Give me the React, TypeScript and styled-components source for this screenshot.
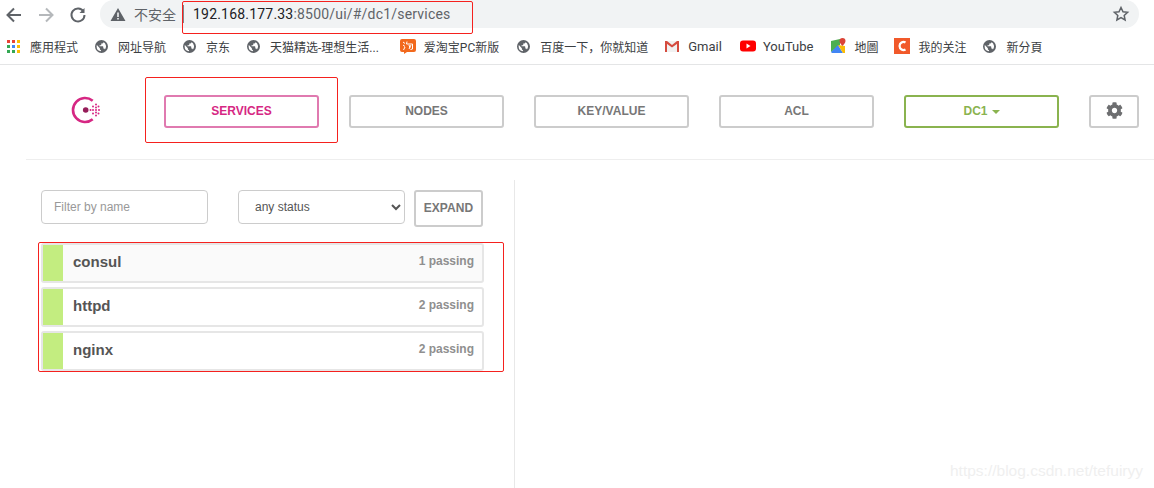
import React from "react";
import styled, { createGlobalStyle } from "styled-components";
import { FaCog } from "react-icons/fa";

const Global = createGlobalStyle`
  html, body { margin: 0; padding: 0; background: #fff; }
  body { width: 1154px; height: 488px; overflow: hidden; font-family: "Liberation Sans", Arial, sans-serif; }
  * { box-sizing: border-box; }
`;

const Page = styled.div`
  position: relative;
  width: 1154px;
  height: 488px;
  overflow: hidden;
  background: #fff;
`;

const Toolbar = styled.div`
  height: 29px;
  display: flex;
  align-items: center;
`;
const NavIcons = styled.div`
  width: 100px;
  display: flex;
  align-items: center;
  gap: 14px;
  padding-left: 5px;
`;
const NavIcon = styled.svg<{ $thin?: boolean }>`
  width: 18px;
  height: 18px;
  flex: none;
  fill: none;
  stroke: ${(p) => p.color};
  stroke-width: ${(p) => (p.$thin ? 1.5 : 2)};
`;
const Omnibox = styled.div`
  width: 1039px;
  height: 28px;
  border-radius: 14px;
  margin-top: -1px;
  background: #f1f3f4;
  display: flex;
  align-items: center;
  padding: 0 9px 0 10px;
`;
const Warn = styled.svg`
  width: 16px;
  height: 15px;
  fill: #5f6368;
  flex: none;
`;
const Insecure = styled.span`
  margin-left: 8px;
  font: 14px "Noto Sans CJK SC", sans-serif;
  color: #5f6368;
  width: 42px;
  white-space: nowrap;
`;
const Sep = styled.span`
  width: 1px;
  height: 18px;
  margin: 0 9px 0 7px;
  background: #80868b;
`;
const Url = styled.span`
  font: 14px Roboto, sans-serif;
  color: #202124;
  flex: 1;
  letter-spacing: 0.2px;
  white-space: nowrap;
`;
const UrlRest = styled.span`
  color: #5f6368;
`;

const Bookmarks = styled.div`
  height: 36px;
  padding: 0 0 1px 7px;
  display: flex;
  align-items: center;
  border-bottom: 1px solid #e4e5e6;
`;
const Bookmark = styled.div<{ $gap?: number; $after?: number; $latin?: boolean }>`
  display: flex;
  align-items: center;
  gap: ${(p) => p.$gap ?? 10}px;
  margin-right: ${(p) => p.$after ?? 17}px;
  font: ${(p) => (p.$latin ? 13 : 12)}px Roboto, "Noto Sans CJK SC", sans-serif;
  color: #3c4043;
  white-space: nowrap;
`;
const BmIcon = styled.svg<{ $size?: number }>`
  width: ${(p) => p.$size ?? 16}px;
  height: ${(p) => p.$size ?? 16}px;
  flex: none;
`;
const Globe = styled.svg`
  width: 13px;
  height: 13px;
  flex: none;
  fill: #5f6368;
`;

const Main = styled.div`
  padding: 30px 15px 0 26px;
`;
const Header = styled.div`
  height: 65px;
  display: flex;
  align-items: flex-start;
  width: 1128px;
  border-bottom: 1px solid #eeeeee;
`;
const Logo = styled.svg`
  width: 30px;
  height: 30px;
  margin: 1px 0 0 45px;
  flex: none;
`;
const Tabs = styled.div`
  display: flex;
  gap: 30px;
  margin-left: 63px;
`;
const TabButton = styled.div<{ $color?: string; $text?: string; $w?: number }>`
  width: ${(p) => p.$w ?? 155}px;
  height: 33px;
  padding-bottom: 2px;
  border: 2px solid ${(p) => p.$color ?? "#cccccc"};
  border-radius: 3px;
  display: flex;
  align-items: center;
  justify-content: center;
  gap: 4px;
  font: bold 12px "Liberation Sans", sans-serif;
  color: ${(p) => p.$text ?? "#777777"};
`;
const Caret = styled.span`
  width: 0;
  height: 0;
  border-left: 4px solid transparent;
  border-right: 4px solid transparent;
  border-top: 4px solid #8ab34f;
  margin-top: 2px;
`;
const Gear = styled(FaCog)`
  width: 17px;
  height: 17px;
  color: #6d6e70;
`;

const Body = styled.div`
  display: flex;
  padding-top: 20px;
`;
const Left = styled.div`
  width: 489px;
  height: 308px;
  border-right: 1px solid #e8e8e8;
  padding: 10px 0 0 15px;
`;
const Filters = styled.div`
  display: flex;
  align-items: flex-start;
`;
const FilterInput = styled.input`
  width: 167px;
  height: 34px;
  border: 1px solid #cccccc;
  border-radius: 4px;
  padding: 0 12px;
  font: 12px "Liberation Sans", sans-serif;
  color: #555;
  background: #fff;
  outline: none;
  &::placeholder { color: #999; opacity: 1; }
`;
const StatusSelect = styled.select`
  width: 167px;
  height: 34px;
  margin-left: 30px;
  border: 1px solid #cccccc;
  border-radius: 4px;
  padding: 0 12px;
  font: 12px "Liberation Sans", sans-serif;
  color: #555;
  background: #fff;
`;
const Expand = styled.div`
  width: 69px;
  height: 37px;
  margin-left: 9px;
  padding-bottom: 2px;
  border: 2px solid #cccccc;
  border-radius: 3px;
  display: flex;
  align-items: center;
  justify-content: center;
  font: bold 12px "Liberation Sans", sans-serif;
  letter-spacing: 0.1px;
  color: #777;
`;
const List = styled.div`
  margin-top: 16px;
  width: 443px;
  display: flex;
  flex-direction: column;
  gap: 4px;
`;
const Row = styled.div<{ $active?: boolean }>`
  height: 40px;
  border: 2px solid #e6e6e6;
  border-radius: 3px;
  background: ${(p) => (p.$active ? "#fafafa" : "#fff")};
  display: flex;
  align-items: stretch;
`;
const Status = styled.div`
  width: 20px;
  background: #c3ed80;
`;
const RowName = styled.div`
  margin-left: 10px;
  flex: 1;
  font: bold 15px/34px "Liberation Sans", sans-serif;
  color: #555;
`;
const RowMeta = styled.div`
  margin-right: 8px;
  font: bold 12px/32px "Liberation Sans", sans-serif;
  color: #8f8f8f;
`;

const Mark = styled.div<{ $x: number; $y: number; $w: number; $h: number }>`
  position: absolute;
  left: ${(p) => p.$x}px;
  top: ${(p) => p.$y}px;
  width: ${(p) => p.$w}px;
  height: ${(p) => p.$h}px;
  border: 1px solid #f5211e;
  border-radius: 2px;
  pointer-events: none;
`;
const Watermark = styled.div`
  position: absolute;
  right: 11px;
  bottom: 8px;
  font: 15.5px "Liberation Sans", sans-serif;
  color: #efefef;
`;

const GlobeIcon = () => (
  <Globe viewBox="0 0 16 16">
    <path d="M8 0a8 8 0 1 0 0 16A8 8 0 0 0 8 0zM2 8c0-.6.1-1.2.3-1.8L6 10v1c0 .8.7 1.4 1.4 1.5v1.4A6 6 0 0 1 2 8zm10.2 3.6c-.2-.6-.7-1-1.3-1h-.7V8.5c0-.4-.3-.7-.7-.7H5.6V6.4H7c.4 0 .7-.3.7-.7V4.300h1.400c.8 0 1.400-.6 1.400-1.400v-.3a6 6 0 0 1 1.700 9z" fillRule="evenodd" />
  </Globe>
);

const tabs = ["NODES", "KEY/VALUE", "ACL"];
const services = [
  { name: "consul", meta: "1 passing", active: true },
  { name: "httpd", meta: "2 passing" },
  { name: "nginx", meta: "2 passing" },
];

export default function App() {
  return (
    <Page>
      <Global />
      <Toolbar>
        <NavIcons>
          <NavIcon viewBox="0 0 18 18" color="#5f6368"><path d="M16 9H3M9 2.500 2.500 9 9 15.500" /></NavIcon>
          <NavIcon viewBox="0 0 18 18" color="#b5b8bb"><path d="M2 9h13M9 2.500 15.500 9 9 15.500" /></NavIcon>
          <NavIcon viewBox="0 0 18 18" color="#5f6368"><path d="M14.500 5.500A6.500 6.500 0 1 0 15.500 9" /><path d="M15.500 2v5h-5" fill="#5f6368" stroke="none" /></NavIcon>
        </NavIcons>
        <Omnibox>
          <Warn viewBox="0 0 16 15"><path d="M8 1 15.500 14H.5zM7.200 5.500v4.500h1.600V5.500zM7.200 11v1.600h1.600V11z" fillRule="evenodd" /></Warn>
          <Insecure>不安全</Insecure>
          <Sep />
          <Url>192.168.177.33<UrlRest>:8500/ui/#/dc1/services</UrlRest></Url>
          <NavIcon viewBox="0 0 18 18" color="#5f6368" $thin><path d="M9 2.500 11 6.800l4.600.5-3.400 3.100.9 4.600L9 12.700 4.900 15l.9-4.600-3.400-3.100 4.600-.5z" /></NavIcon>
        </Omnibox>
      </Toolbar>
      <Bookmarks>
        <Bookmark>
          <BmIcon viewBox="0 0 13 13" $size={13}>
            <rect x="0" y="0" width="3" height="3" fill="#ea4335" /><rect x="5" y="0" width="3" height="3" fill="#ea4335" /><rect x="10" y="0" width="3" height="3" fill="#fbbc05" />
            <rect x="0" y="5" width="3" height="3" fill="#34a853" /><rect x="5" y="5" width="3" height="3" fill="#4285f4" /><rect x="10" y="5" width="3" height="3" fill="#fbbc05" />
            <rect x="0" y="10" width="3" height="3" fill="#34a853" /><rect x="5" y="10" width="3" height="3" fill="#34a853" /><rect x="10" y="10" width="3" height="3" fill="#fbbc05" />
          </BmIcon>
          應用程式
        </Bookmark>
        <Bookmark><GlobeIcon />网址导航</Bookmark>
        <Bookmark><GlobeIcon />京东</Bookmark>
        <Bookmark $after={21}><GlobeIcon />天猫精选-理想生活...</Bookmark>
        <Bookmark $gap={8} $after={18}>
          <BmIcon viewBox="0 0 16 16">
            <path d="M2 1h12a2 2 0 0 1 2 2v9a2 2 0 0 1-2 2H7l-3 2v-2H2a2 2 0 0 1-2-2V3a2 2 0 0 1 2-2z" fill="#f2691d" />
            <path d="M3 4l2 1.500M3 7l2 1.500M3.500 12 5 9M7 3.500 6.500 6h6v5l-2 .5M9 7l1 3M11 7l-2 4" stroke="#fff" strokeWidth="1" fill="none" />
          </BmIcon>
          爱淘宝PC新版
        </Bookmark>
        <Bookmark $after={16}><GlobeIcon />百度一下，你就知道</Bookmark>
        <Bookmark $gap={8} $after={18} $latin>
          <BmIcon viewBox="0 0 16 16">
            <path d="M1 3h14v11H1z" fill="#f1f1f1" />
            <path d="M1 14V3h2v11zM13 14V3h2v11z" fill="#d54c3f" />
            <path d="M1 3h2l5 4 5-4h2v1.500L8 9.500 1 4.500z" fill="#d54c3f" />
          </BmIcon>
          Gmail
        </Bookmark>
        <Bookmark $gap={7} $after={17} $latin>
          <BmIcon viewBox="0 0 16 16">
            <rect x="0" y="2.500" width="16" height="11" rx="3" fill="#f00" />
            <path d="M6.500 5.500v5l4-2.500z" fill="#fff" />
          </BmIcon>
          YouTube
        </Bookmark>
        <Bookmark $gap={8} $after={16}>
          <BmIcon viewBox="0 0 16 16">
            <path d="M1 3 10 1v6L1 14z" fill="#4caf50" />
            <path d="M1 14 8 7l5 8H2z" fill="#4285f4" />
            <path d="M8 7 13 15h2V8z" fill="#fbbc05" />
            <path d="M12.500 0a3 3 0 0 0-3 3c0 2 3 5 3 5s3-3 3-5a3 3 0 0 0-3-3z" fill="#db4437" />
          </BmIcon>
          地圖
        </Bookmark>
        <Bookmark $gap={8}>
          <BmIcon viewBox="0 0 16 16">
            <rect width="16" height="16" fill="#f1592a" />
            <path d="M11.500 4.500A4 4 0 1 0 11.500 11.500" stroke="#fff" strokeWidth="2.200" fill="none" />
          </BmIcon>
          我的关注
        </Bookmark>
        <Bookmark><GlobeIcon />新分頁</Bookmark>
      </Bookmarks>
      <Main>
        <Header>
          <Logo viewBox="0 0 30 30">
            <path d="M21.700 4.800A12 12 0 1 0 21.700 23.200" fill="none" stroke="#d62783" strokeWidth="2.600" />
            <circle cx="14.700" cy="14" r="2.800" fill="#961d59" />
            <g fill="#d62783">
              <circle cx="19.500" cy="14" r="1" /><circle cx="22" cy="10.500" r="1" /><circle cx="25" cy="8.500" r="1" /><circle cx="25" cy="11.500" r="1" /><circle cx="27.500" cy="10.500" r="1" />
              <circle cx="22" cy="14" r="1" /><circle cx="25" cy="14" r="1" /><circle cx="28" cy="14" r="1" /><circle cx="22" cy="17.500" r="1" /><circle cx="25" cy="16.500" r="1" /><circle cx="27.500" cy="17.500" r="1" /><circle cx="25" cy="19.500" r="1" />
            </g>
          </Logo>
          <Tabs>
            <TabButton $color="#e07ab0" $text="#d62783">SERVICES</TabButton>
            {tabs.map((t) => <TabButton key={t}>{t}</TabButton>)}
            <TabButton $color="#8ab34f" $text="#8ab34f">DC1<Caret /></TabButton>
            <TabButton $w={50}><Gear /></TabButton>
          </Tabs>
        </Header>
        <Body>
          <Left>
            <Filters>
              <FilterInput placeholder="Filter by name" />
              <StatusSelect defaultValue="any"><option value="any">any status</option></StatusSelect>
              <Expand>EXPAND</Expand>
            </Filters>
            <List>
              {services.map((s) => (
                <Row key={s.name} $active={s.active}>
                  <Status />
                  <RowName>{s.name}</RowName>
                  <RowMeta>{s.meta}</RowMeta>
                </Row>
              ))}
            </List>
          </Left>
        </Body>
      </Main>
      <Mark $x={182} $y={1} $w={291} $h={33} />
      <Mark $x={145} $y={77} $w={193} $h={66} />
      <Mark $x={38} $y={242} $w={466} $h={130} />
      <Watermark>https://blog.csdn.net/tefuiryy</Watermark>
    </Page>
  );
}
